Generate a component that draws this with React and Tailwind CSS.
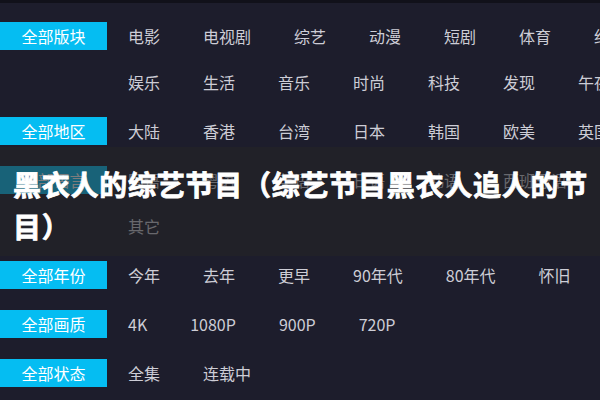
import React from 'react';

const rows = [
  { label: '全部版块', items: ['电影', '电视剧', '综艺', '动漫', '短剧', '体育', '纪录片', '娱乐', '生活', '音乐', '时尚', '科技', '发现', '午夜'] },
  { label: '全部地区', items: ['大陆', '香港', '台湾', '日本', '韩国', '欧美', '英国', '泰国'] },
  { label: '全部语言', items: ['国语', '粤语', '英语', '日语', '韩语', '西班牙语', '法语', '其它'] },
  { label: '全部年份', items: ['今年', '去年', '更早', '90年代', '80年代', '怀旧'] },
  { label: '全部画质', items: ['4K', '1080P', '900P', '720P'] },
  { label: '全部状态', items: ['全集', '连载中'] },
];

function FilterRow({ label, items }) {
  return (
    <div className="flex items-start mb-[3px]">
      <div className="w-[107px] h-[28px] mt-[9px] mr-[21px] shrink-0 bg-[#05bdf2] text-white text-[16px] leading-[28px] text-center">
        {label}
      </div>
      <div className="w-[560px] flex flex-wrap gap-x-[43px]">
        {items.map((item) => (
          <span key={item} className="h-[46px] leading-[46px] text-[16px] text-[#cdcdd6] whitespace-nowrap">
            {item}
          </span>
        ))}
      </div>
    </div>
  );
}

export default function App() {
  return (
    <div
      className="relative w-[600px] h-[400px] overflow-hidden bg-[#1d1d2c]"
      style={{ fontFamily: '"Noto Sans CJK SC", "Noto Sans", sans-serif' }}
    >
      <div className="h-[3px] bg-[#11111a]" />
      <div className="w-[700px] pt-[10px]">
        {rows.map((row) => (
          <FilterRow key={row.label} {...row} />
        ))}
      </div>

      {/* title band over the filter list */}
      <div className="absolute left-0 right-0 top-[147px] h-[109px] bg-[rgba(36,37,38,0.6)] pl-[13px] pr-[8px] pt-[16px]">
        <h1 className="text-white text-[28px] leading-[42px] font-bold tracking-[0.75px] [-webkit-text-stroke:0.8px_white]">
          黑衣人的综艺节目（综艺节目黑衣人追人的节目）
        </h1>
      </div>
    </div>
  );
}
